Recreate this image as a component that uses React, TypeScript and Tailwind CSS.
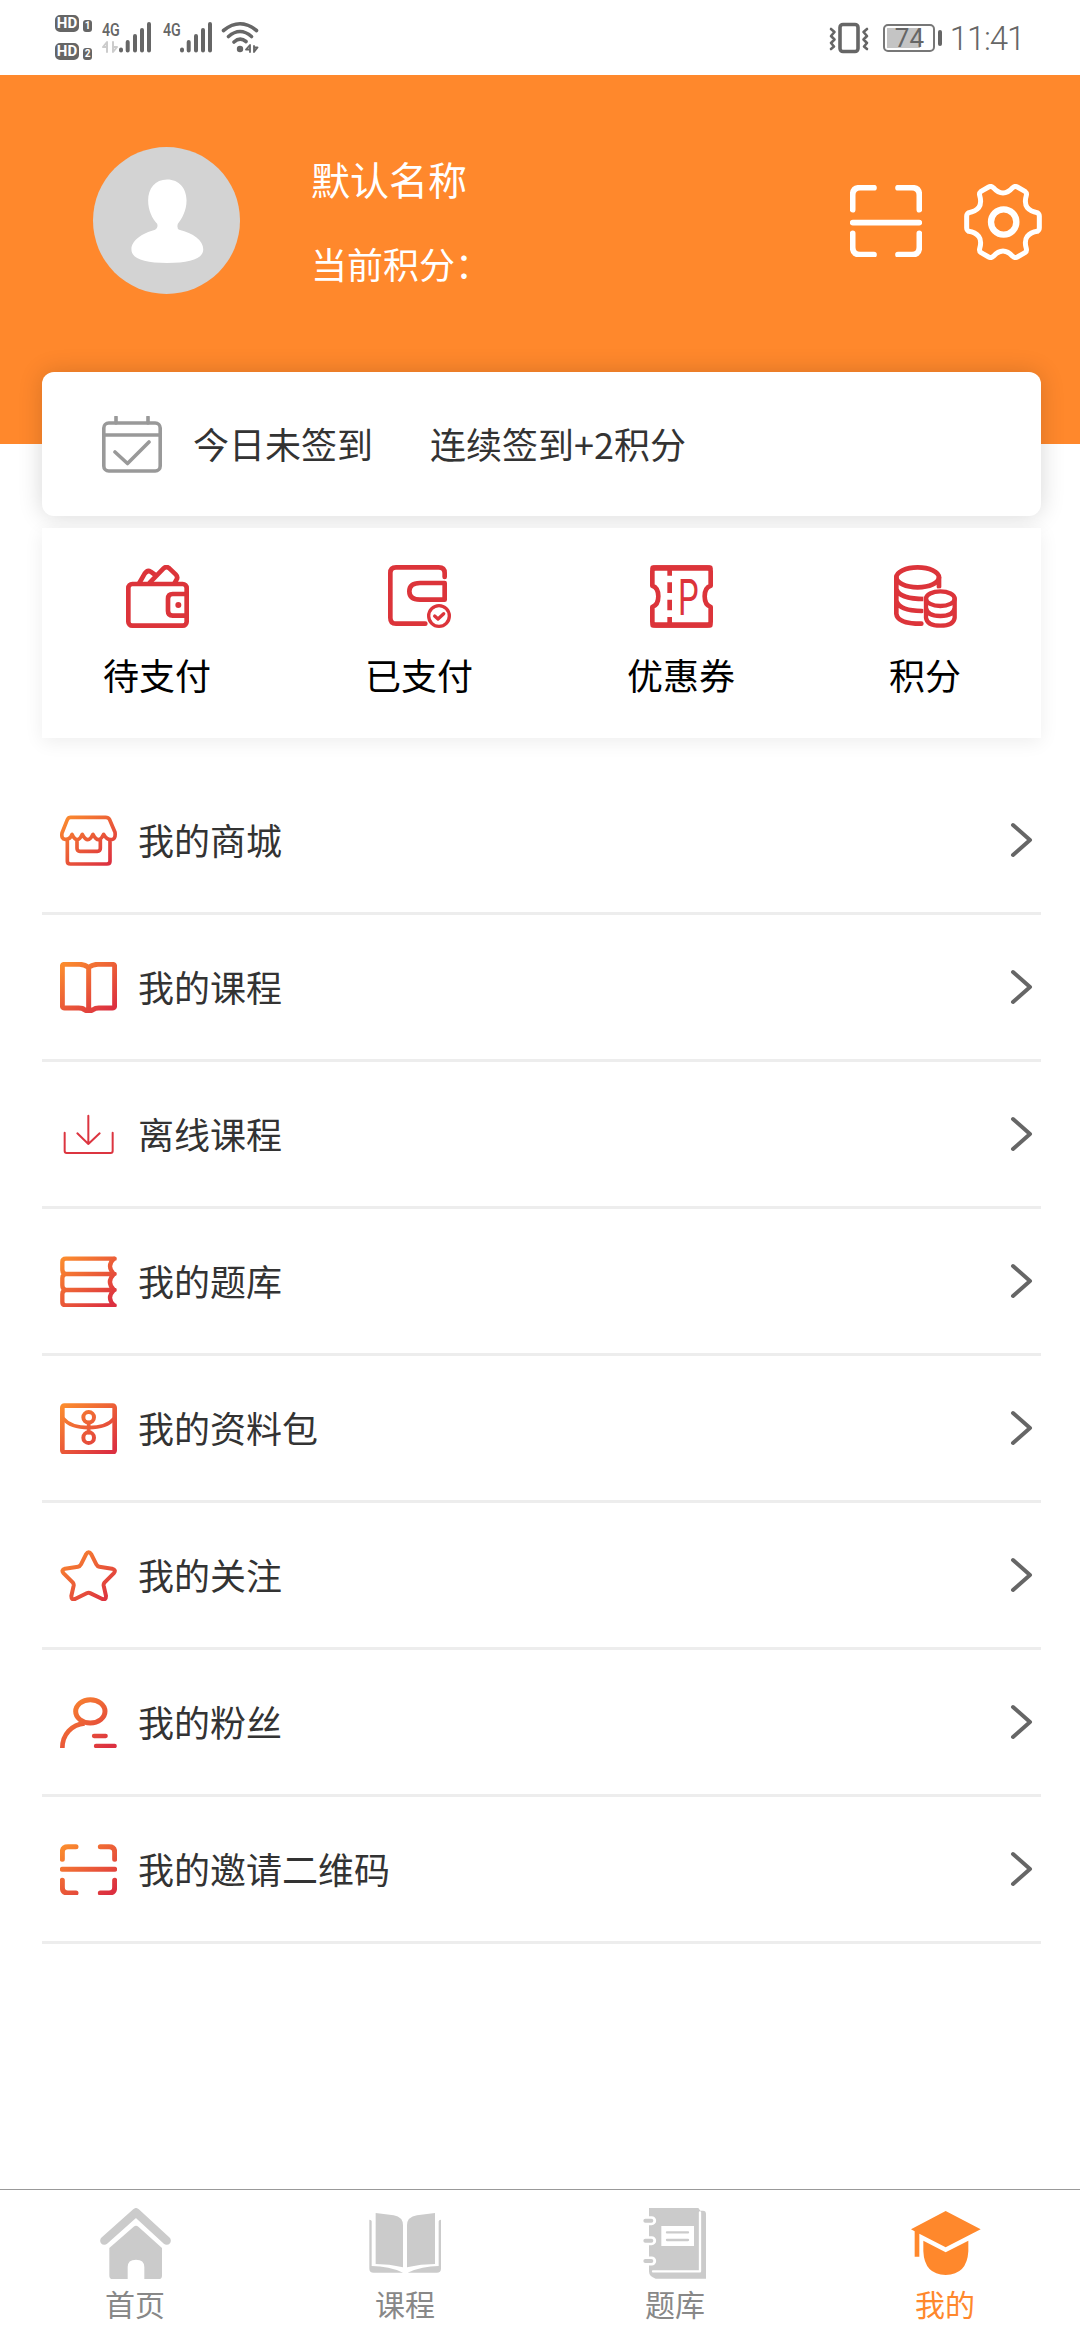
import type { ReactNode } from "react";

const Svg = ({ className, viewBox, children }: { className: string; viewBox: string; children: ReactNode }) => (
    <svg className={className} viewBox={viewBox} fill="none" strokeLinecap="round" strokeLinejoin="round">
        {children}
    </svg>
);

const Signal = () => (
    <Svg className="w-[34px] h-8" viewBox="0 0 34 32">
        <g stroke="#666" strokeWidth="4">
            <path d="M3 27.5V28.5M9.7 20V28.5M17 14V28.5M24 8V28.5M31 2V28.5" />
        </g>
    </Svg>
);

const HdBadge = ({ sim }: { sim: string }) => (
    <div className="flex items-end gap-1">
        <span className="flex h-[17px] w-6 items-center justify-center rounded-[5px] border-2 border-[#666] bg-[#666] text-[15px] leading-none font-bold text-white">HD</span>
        <span className="flex h-3 w-[9px] items-center justify-center rounded-[3px] bg-[#666] text-[10px] leading-none font-bold text-white">{sim}</span>
    </div>
);

const StatusBar = () => (
    <div className="flex h-[75px] items-start justify-between pl-[55px] pr-[56px] font-[Roboto,sans-serif] text-[#666]">
        <div className="flex">
            <div className="flex w-[47px] flex-col gap-[11px] pt-[15px]">
                <HdBadge sim="1" />
                <HdBadge sim="2" />
            </div>
            <div className="flex w-[61px] pt-[22px]">
                <div className="flex w-4 flex-col">
                    <span className="origin-left scale-x-75 text-[19px] leading-[15px] font-medium">4G</span>
                    <Svg className="mt-1 h-3 w-4" viewBox="0 0 16 12">
                        <path d="M5 11V1L1 6H5M11 1V11L15 6H11" stroke="#ccc" strokeWidth="2" />
                    </Svg>
                </div>
                <Signal />
            </div>
            <div className="flex w-[58px] pt-[22px]">
                <span className="w-4 origin-left scale-x-75 text-[19px] leading-[15px] font-medium">4G</span>
                <Signal />
            </div>
            <Svg className="mt-[21px] h-8 w-[38px]" viewBox="0 0 38 32">
                <g stroke="#666" strokeWidth="3.6">
                    <path d="M2.500 9.500Q19 -4 35.500 9.500M7.500 15.500Q19 5.500 30.500 15.500M13 21Q19 15.500 25 20.500" />
                </g>
                <circle cx="19" cy="28" r="3.200" fill="#666" />
                <path d="M29 31V24L25 28.500H29M33 25V31L36.500 26.500H33" stroke="#666" strokeWidth="1.800" />
            </Svg>
        </div>
        <div className="flex items-center pt-[21px]">
            <Svg className="h-8 w-10" viewBox="0 0 40 32">
                <rect x="11" y="2.5" width="18" height="27" rx="3" stroke="#666" strokeWidth="3.600" />
                <path d="M2 7L5.500 10L2 14L5.500 17.500L2 21L5 24.500L2 27M38 7L34.500 10L38 14L34.500 17.500L38 21L35 24.500L38 27" stroke="#666" strokeWidth="2.600" />
            </Svg>
            <div className="ml-[14px] flex h-7 w-[52px] items-center rounded-[5px] border-2 border-[#777] p-[2px]">
                <div className="flex h-5 w-[33px] items-center bg-[#c4c4c4]">
                    <span className="pl-2 text-[26px] leading-5">74</span>
                </div>
            </div>
            <div className="ml-[3px] h-4 w-1 rounded-sm bg-[#666]" />
            <span className="ml-2 pt-0.5 text-[33px] leading-8 font-[350] tracking-[-1.200px]">11:41</span>
        </div>
    </div>
);

const ScanPath = () => (
    <path d="M8 74V30Q8 8 30 8H72M144 8H186Q208 8 208 30V74M8 113H208M8 145V187Q8 209 30 209H72M144 209H186Q208 209 208 187V145" />
);

const Header = () => (
    <div className="flex h-[369px] bg-[#ff882c] pl-[93px] pr-[38px] text-white">
        <Svg className="mt-[72px] size-[147px] rounded-full bg-[#d3d3d3]" viewBox="0 0 440 440">
            <path
                fill="#fff"
                d="M222 97C258 97 280 124 280 160C280 190 266 215 254 230Q250 243 258 248C300 258 330 280 330 306C330 335 290 347 222 347C154 347 115 335 115 306C115 280 148 258 186 248Q196 243 192 230C178 215 165 190 165 160C165 124 186 97 222 97Z"
            />
        </Svg>
        <div className="ml-[71px] flex flex-1 flex-col pt-[75px]">
            <span className="text-[39px] leading-[56px]">默认名称</span>
            <span className="mt-[30px] text-[36px] leading-[54px]">当前积分：</span>
        </div>
        <Svg className="mt-[110px] size-[72px]" viewBox="0 0 216 216">
            <g stroke="#fff" strokeWidth="17">
                <ScanPath />
            </g>
        </Svg>
        <Svg className="mt-[109px] ml-[42px] h-[76px] w-[78px]" viewBox="0 0 234 228">
            <g stroke="#fff" strokeWidth="15">
                <path d="M51 22L74 9Q82 5 88 11Q102 27 117 27Q132 27 146 11Q152 5 160 9L183 22Q189 27 187 34Q180 58 190 71Q200 83 220 86Q226 90 226 97V131Q226 138 220 142Q200 145 190 157Q180 170 187 194Q189 201 183 206L160 219Q152 223 146 217Q132 201 117 201Q102 201 88 217Q82 223 74 219L51 206Q45 201 47 194Q54 170 44 157Q34 145 14 142Q8 138 8 131V97Q8 90 14 86Q34 83 44 71Q54 58 47 34Q45 27 51 22Z" />
                <circle cx="119" cy="114" r="38" strokeWidth="19" />
            </g>
        </Svg>
    </div>
);

const CheckInCard = () => (
    <div className="mx-[42px] mt-[-72px] flex h-36 w-[999px] items-center rounded-xl bg-white pl-[60px] text-[36px] text-[#333] shadow-[0_0_24px_rgba(0,0,0,0.16)]">
        <Svg className="h-[57px] w-[60px]" viewBox="0 0 60 57">
            <g stroke="#999" strokeWidth="3.600">
                <rect x="1.800" y="7" width="56.400" height="48" rx="5" />
                <path d="M2 19H58M14 1V7M46 1V7M13 36L25.500 47.500L47 26" />
            </g>
        </Svg>
        <span className="ml-[31px] -mt-0.5">今日未签到</span>
        <span className="ml-[57px] -mt-0.5">连续签到+2积分</span>
    </div>
);

const shortcuts = [
    {
        label: "待支付",
        icon: (
            <>
                <rect x="7" y="57" width="175" height="125" rx="12" />
                <path d="M183 87H140Q126 87 126 101V138Q126 152 140 152H183M40 54L56 26Q64 14 74 20L88 30M72 52L112 11Q121 2 130 10L149 28Q157 36 151 45L146 54" />
                <circle cx="157" cy="120" r="9" fill="#dc343a" stroke="none" />
            </>
        ),
    },
    {
        label: "已支付",
        icon: (
            <>
                <path d="M170 36V24Q170 7 152 7H24Q7 7 7 24V158Q7 176 24 176H112M170 54V104H96Q64 104 64 79Q64 54 96 54Z" />
                <circle cx="153" cy="153" r="31" strokeWidth="10" />
                <path d="M140 153L150 162L167 146" strokeWidth="10" />
            </>
        ),
    },
    {
        label: "优惠券",
        icon: (
            <>
                <path d="M7 18Q7 8 18 8H171Q182 8 182 18V62Q164 68 164 94Q164 120 182 126V171Q182 181 171 181H18Q7 181 7 171V126Q25 120 25 94Q25 68 7 62Z" />
                <path d="M9 9H180M9 180H180" strokeWidth="16" />
                <path d="M59 12V32M59 52V84M59 104V136M59 156V178" strokeLinecap="butt" />
                <text x="84" y="150" textLength="62" lengthAdjust="spacingAndGlyphs" fontFamily="Roboto" fontSize="148" fill="#dc343a" stroke="none">P</text>
            </>
        ),
    },
    {
        label: "积分",
        icon: (
            <>
                <ellipse cx="71" cy="37" rx="64" ry="30" />
                <path d="M7 37V146Q10 176 82 176M135 37V66M7 72Q16 102 92 102M7 107Q16 138 84 138" />
                <path d="M88 98Q94 70 140 70Q184 70 189 98V160Q180 189 140 189Q98 189 88 160Z" fill="#fff" stroke="none" />
                <ellipse cx="139" cy="101" rx="43" ry="22" strokeWidth="13" />
                <path d="M96 101V158Q99 182 139 182Q179 182 182 158V101M96 128Q99 153 139 153Q179 153 182 128" strokeWidth="13" />
            </>
        ),
    },
];

const Shortcuts = () => (
    <div className="mx-[42px] mt-3 flex h-[210px] w-[999px] gap-[154px] bg-white pt-[37px] pl-[61px] text-[36px] text-black shadow-[0_4px_18px_rgba(0,0,0,0.07)]">
        {shortcuts.map(({ label, icon }) => (
            <div key={label} className="flex flex-col items-center">
                <Svg className="size-[63px]" viewBox="0 0 189 189">
                    <g stroke="#dc343a" strokeWidth="14">{icon}</g>
                </Svg>
                <span className="mt-[19px] leading-[54px]">{label}</span>
            </div>
        ))}
    </div>
);

const menu = [
    {
        label: "我的商城",
        icon: (
            <path d="M32 7H137Q145 7 149 14L165 52Q168 74 152 74Q140 74 131 58Q116 90 99 58Q84 90 67 58Q52 90 36 58Q30 74 16 73Q3 72 6 54L22 14Q25 7 32 7ZM22 76V139Q22 147 31 147H141Q150 147 150 139V76M51 76V100Q51 109 60 109H112Q121 109 121 100V76" strokeWidth="11" />
        ),
    },
    {
        label: "我的课程",
        icon: (
            <path d="M86 16Q72 7 58 7H14Q7 7 7 14V130Q7 138 14 138H56Q68 138 73 143Q86 151 99 143Q106 138 116 138H157Q164 138 164 130V14Q164 7 157 7H114Q98 7 86 16V145" strokeWidth="15" />
        ),
    },
    {
        label: "离线课程",
        icon: <path d="M85 20V105M52 73L85 105L119 73M14 71V126Q14 132 20 132H152Q158 132 158 126V71" stroke="#dc3540" strokeWidth="6" />,
    },
    {
        label: "我的题库",
        icon: (
            <path d="M164 8H18Q7 8 7 18V40Q7 53 18 54H164M18 54Q7 55 7 67V88Q7 101 18 102H164M18 102Q7 103 7 115V137Q7 148 18 148H164M162 8Q138 30 162 54Q138 78 162 102Q138 126 162 148" strokeWidth="13" />
        ),
    },
    {
        label: "我的资料包",
        icon: (
            <>
                <rect x="7" y="8" width="157" height="140" rx="6" strokeWidth="14" />
                <path d="M10 47Q32 74 86 74Q140 74 162 47M86 58V89" strokeWidth="11" />
                <circle cx="86" cy="43" r="16" strokeWidth="12" />
                <circle cx="86" cy="104" r="16" strokeWidth="12" />
            </>
        ),
    },
    {
        label: "我的关注",
        icon: (
            <path d="M78 13Q86 0 94 13L109 43Q112 49 118 50L156 56Q170 60 161 70L134 97Q130 102 131 107L138 138Q138 151 127 147L92 130Q86 127 80 130L45 147Q34 151 34 138L41 107Q42 102 38 97L11 70Q2 60 15 56L54 50Q60 49 63 43Z" strokeWidth="12" />
        ),
    },
    {
        label: "我的粉丝",
        icon: (
            <>
                <ellipse cx="91" cy="43" rx="44" ry="35" strokeWidth="15" />
                <path d="M7 153C7 112 36 82 74 79" strokeWidth="14" strokeLinecap="butt" />
                <path d="M102 117H137M108 147H164" strokeWidth="13" />
            </>
        ),
    },
    {
        label: "我的邀请二维码",
        icon: (
            <path d="M7 46V24Q7 8 24 8H48M121 8H147Q164 8 164 24V46M7 76H164M7 109V130Q7 147 24 147H48M121 147H147Q164 147 164 130V109" strokeWidth="15" />
        ),
    },
];

const MenuList = () => (
    <div className="mt-[30px] flex flex-col px-[42px]">
        {menu.map(({ label, icon }) => (
            <div key={label} className="flex h-[147px] w-[999px] items-center border-b-[3px] border-[#ededed] pr-[7px] pl-[18px]">
                <Svg className="h-[51px] w-[57px]" viewBox="0 0 171 153">
                    <defs>
                        <linearGradient id="warm" gradientUnits="userSpaceOnUse" x1="20" y1="0" x2="140" y2="153">
                            <stop offset="0" stopColor="#fb8b2e" />
                            <stop offset="1" stopColor="#dc3040" />
                        </linearGradient>
                    </defs>
                    <g stroke="url(#warm)">{icon}</g>
                </Svg>
                <span className="-mt-0.5 ml-[21px] flex-1 text-[36px] leading-[54px] text-[#333]">{label}</span>
                <Svg className="h-9 w-6" viewBox="0 0 24 36">
                    <path d="M3 3L20 18L3 33" stroke="#666" strokeWidth="4" />
                </Svg>
            </div>
        ))}
    </div>
);

const tabs = [
    {
        label: "首页",
        icon: (
            <>
                <path d="M16 98L111 13L203 98" stroke="#cbcbcb" strokeWidth="25" />
                <path d="M31 120L104 56Q111 50 118 56L189 120V203Q189 213 179 213H136V177Q136 155 111 155Q86 155 86 177V213H41Q31 213 31 203Z" fill="#cbcbcb" />
            </>
        ),
    },
    {
        label: "课程",
        icon: (
            <path d="M20 15L74 22Q102 27 102 52V178Q60 168 20 168ZM198 15L144 22Q114 27 114 52V178Q156 168 198 168ZM1 35Q8 35 8 40V174Q60 174 102 194H14Q1 194 1 182ZM216 35Q209 35 209 40V174Q160 174 116 194H203Q216 194 216 182Z" fill="#cbcbcb" />
        ),
    },
    {
        label: "题库",
        icon: (
            <>
                <path d="M30 0H178L184 8H192Q201 8 201 18V212H50Q30 206 30 190Z" fill="#cbcbcb" />
                <path d="M183 13V190H42" stroke="#fff" strokeWidth="7" />
                <path d="M22 38H38M22 98H38M22 159H38" stroke="#fff" strokeWidth="27" />
                <path d="M19 38H37M19 98H37M19 159H37" stroke="#cbcbcb" strokeWidth="12" />
                <path d="M67 54H165V114H67Z" fill="#fff" />
                <path d="M84 73H147M84 96H147" stroke="#cbcbcb" strokeWidth="7" />
            </>
        ),
    },
    {
        label: "我的",
        active: true,
        icon: (
            <path d="M110 9L215 64L110 118L31 77V146H17V70L6 64ZM43 98L110 133L178 98V130Q174 200 110 201Q46 200 43 130Z" fill="#ff882c" />
        ),
    },
];

const TabBar = () => (
    <div className="grid h-[151px] grid-cols-4 border-t border-[#999] bg-white">
        {tabs.map(({ label, icon, active }) => (
            <div key={label} className="flex flex-col items-center pt-[18px]">
                <Svg className="size-[72px]" viewBox="0 0 216 216">{icon}</Svg>
                <span className={active ? "mt-px text-[30px] leading-[44px] text-[#ff882c]" : "mt-px text-[30px] leading-[44px] text-[#888]"}>
                    {label}
                </span>
            </div>
        ))}
    </div>
);

const App = () => {
    return (
        <div className="flex h-[2340px] w-[1080px] flex-col overflow-hidden bg-white font-['Noto_Sans_CJK_SC',sans-serif]">
            <StatusBar />
            <Header />
            <CheckInCard />
            <Shortcuts />
            <MenuList />
            <div className="mt-auto">
                <TabBar />
            </div>
        </div>
    );
};

export default App;
